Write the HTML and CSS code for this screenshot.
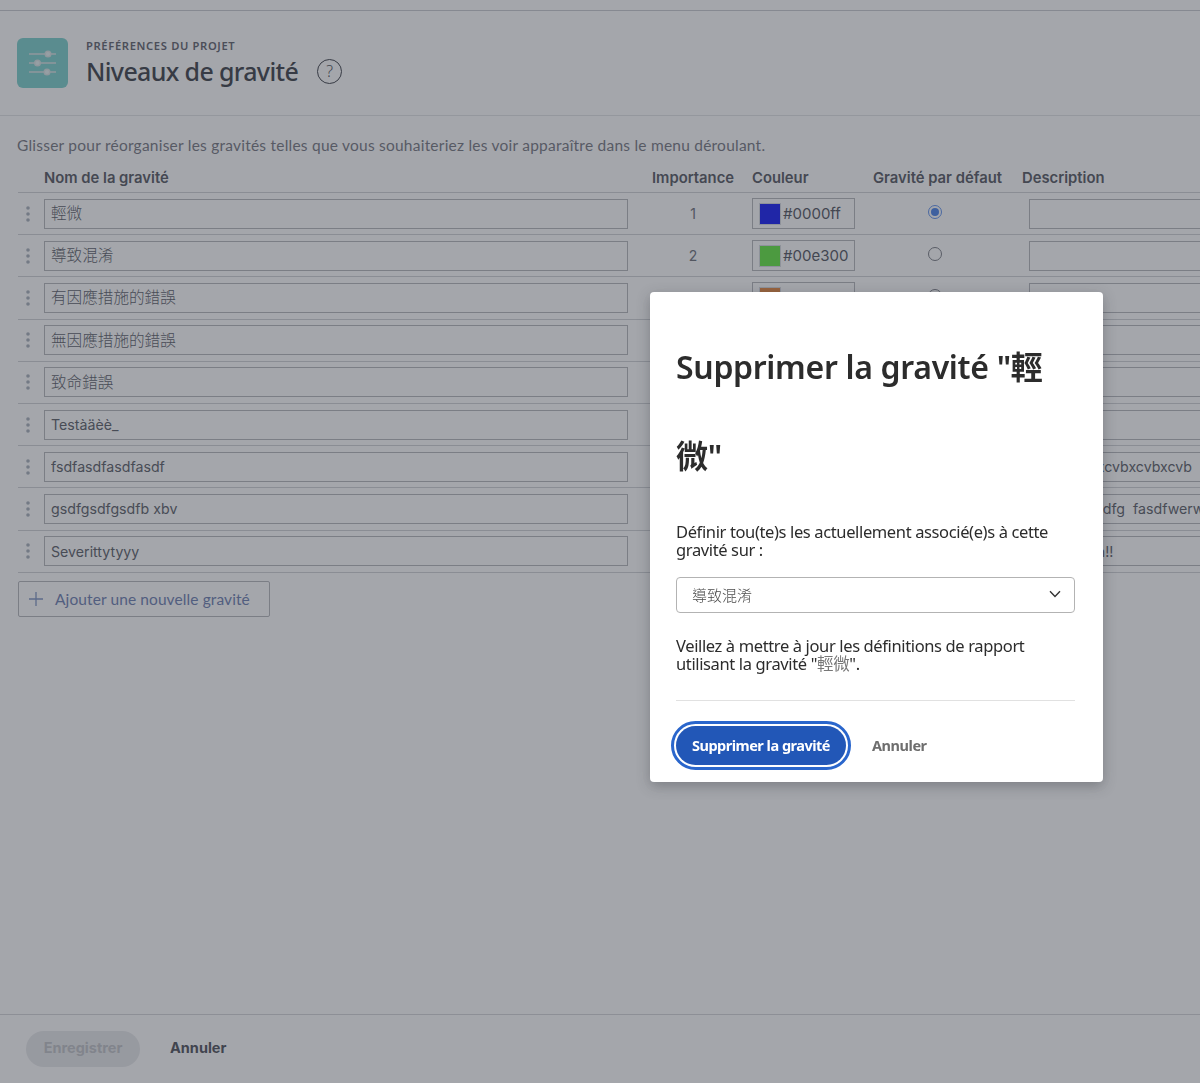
FILE: index.html
```html
<!DOCTYPE html>
<html lang="fr">
<head>
<meta charset="utf-8">
<title>Niveaux de gravité</title>
<link rel="stylesheet" href="styles.css">
</head>
<body>
<div class="app">
  <div class="topbar"></div>
  <header class="head">
    <div class="head-icon">
      <svg width="51" height="50" viewBox="0 0 51 50" fill="none" stroke="#d9e4e4" stroke-width="1.4">
        <path d="M12 16H39M12 25H39M12 34H39"/>
        <circle cx="31" cy="16" r="2.8" fill="#e6f2f2"/>
        <circle cx="20.5" cy="25" r="2.8" fill="#e6f2f2"/>
        <circle cx="30" cy="34" r="2.8" fill="#e6f2f2"/>
      </svg>
    </div>
    <div class="head-text">
      <div class="eyebrow">PRÉFÉRENCES DU PROJET</div>
      <h1 class="title">Niveaux de gravité</h1>
    </div>
    <div class="help">?</div>
  </header>
  <main class="main">
    <p class="intro">Glisser pour réorganiser les gravités telles que vous souhaiteriez les voir apparaître dans le menu déroulant.</p>
    <div class="table">
      <div class="row row-head">
        <div></div><div>Nom de la gravité</div><div>Importance</div><div>Couleur</div><div>Gravité par défaut</div><div>Description</div>
      </div>
      <div class="row">
        <svg class="grip" width="6" height="16" viewBox="0 0 6 16"><circle cx="3" cy="2" r="1.8"/><circle cx="3" cy="8" r="1.8"/><circle cx="3" cy="14" r="1.8"/></svg>
        <input class="field cjk" value="輕微"><div class="num">1</div>
        <div class="color"><span class="swatch sw-blue"></span>#0000ff</div>
        <div class="radio-cell"><span class="radio on"></span></div>
        <input class="field desc" value="">
      </div>
      <div class="row">
        <svg class="grip" width="6" height="16" viewBox="0 0 6 16"><circle cx="3" cy="2" r="1.8"/><circle cx="3" cy="8" r="1.8"/><circle cx="3" cy="14" r="1.8"/></svg>
        <input class="field cjk" value="導致混淆"><div class="num">2</div>
        <div class="color"><span class="swatch sw-green"></span>#00e300</div>
        <div class="radio-cell"><span class="radio"></span></div>
        <input class="field desc" value="">
      </div>
      <div class="row">
        <svg class="grip" width="6" height="16" viewBox="0 0 6 16"><circle cx="3" cy="2" r="1.8"/><circle cx="3" cy="8" r="1.8"/><circle cx="3" cy="14" r="1.8"/></svg>
        <input class="field cjk" value="有因應措施的錯誤"><div class="num"></div>
        <div class="color"><span class="swatch sw-orange"></span></div>
        <div class="radio-cell"><span class="radio"></span></div>
        <input class="field desc" value="">
      </div>
      <div class="row">
        <svg class="grip" width="6" height="16" viewBox="0 0 6 16"><circle cx="3" cy="2" r="1.8"/><circle cx="3" cy="8" r="1.8"/><circle cx="3" cy="14" r="1.8"/></svg>
        <input class="field cjk" value="無因應措施的錯誤"><div class="num"></div>
        <div class="color"></div>
        <div class="radio-cell"><span class="radio"></span></div>
        <input class="field desc" value="">
      </div>
      <div class="row">
        <svg class="grip" width="6" height="16" viewBox="0 0 6 16"><circle cx="3" cy="2" r="1.8"/><circle cx="3" cy="8" r="1.8"/><circle cx="3" cy="14" r="1.8"/></svg>
        <input class="field cjk" value="致命錯誤"><div class="num"></div>
        <div class="color"></div>
        <div class="radio-cell"><span class="radio"></span></div>
        <input class="field desc" value="">
      </div>
      <div class="row">
        <svg class="grip" width="6" height="16" viewBox="0 0 6 16"><circle cx="3" cy="2" r="1.8"/><circle cx="3" cy="8" r="1.8"/><circle cx="3" cy="14" r="1.8"/></svg>
        <input class="field" value="Testàäèè_"><div class="num"></div>
        <div class="color"></div>
        <div class="radio-cell"><span class="radio"></span></div>
        <input class="field desc" value="">
      </div>
      <div class="row">
        <svg class="grip" width="6" height="16" viewBox="0 0 6 16"><circle cx="3" cy="2" r="1.8"/><circle cx="3" cy="8" r="1.8"/><circle cx="3" cy="14" r="1.8"/></svg>
        <input class="field" value="fsdfasdfasdfasdf"><div class="num"></div>
        <div class="color"></div>
        <div class="radio-cell"><span class="radio"></span></div>
        <input class="field desc" value="fcvbxcvbxcvbxcvbxcvb">
      </div>
      <div class="row">
        <svg class="grip" width="6" height="16" viewBox="0 0 6 16"><circle cx="3" cy="2" r="1.8"/><circle cx="3" cy="8" r="1.8"/><circle cx="3" cy="14" r="1.8"/></svg>
        <input class="field" value="gsdfgsdfgsdfb xbv"><div class="num"></div>
        <div class="color"></div>
        <div class="radio-cell"><span class="radio"></span></div>
        <input class="field desc" value="sdfgsdfgi dfg  fasdfwerwerwer">
      </div>
      <div class="row">
        <svg class="grip" width="6" height="16" viewBox="0 0 6 16"><circle cx="3" cy="2" r="1.8"/><circle cx="3" cy="8" r="1.8"/><circle cx="3" cy="14" r="1.8"/></svg>
        <input class="field" value="Severittytyyy"><div class="num"></div>
        <div class="color"></div>
        <div class="radio-cell"><span class="radio"></span></div>
        <input class="field desc" value="Test testin!!">
      </div>
    </div>
    <button class="add">
      <svg width="16" height="16" viewBox="0 0 16 16" fill="none" stroke="#7d94c4" stroke-width="1.3"><path d="M8 1V15M1 8H15"/></svg>
      Ajouter une nouvelle gravité
    </button>
  </main>
  <footer class="foot">
    <button class="save">Enregistrer</button>
    <button class="cancel">Annuler</button>
  </footer>
</div>
<div class="overlay"></div>
<div class="modal">
  <h2 class="modal-title">Supprimer la gravité "輕微"</h2>
  <p class="modal-text set-label">Définir tou(te)s les actuellement associé(e)s à cette gravité sur :</p>
  <div class="select">
    <span>導致混淆</span>
    <svg width="12" height="8" viewBox="0 0 12 8" fill="none" stroke="#333" stroke-width="1.4"><path d="M1 1.2L6 6.4L11 1.2"/></svg>
  </div>
  <p class="modal-text note">Veillez à mettre à jour les définitions de rapport utilisant la gravité "<span class="cjk-grey">輕微</span>".</p>
  <div class="modal-actions">
    <button class="danger">Supprimer la gravité</button>
    <button class="modal-cancel">Annuler</button>
  </div>
</div>
</body>
</html>
```
FILE: styles.css
```css
* { box-sizing: border-box; }
html, body { margin: 0; height: 100%; overflow: hidden; background: #fff; }
body { font-family: "Open Sans", "Noto Sans CJK TC", sans-serif; color: #4b4e57; font-size: 14px; }
button { font-family: inherit; cursor: pointer; }

.app { height: 1083px; width: 1200px; display: flex; flex-direction: column; overflow: hidden; }
.topbar { height: 11px; border-bottom: 1px solid #c9cbd0; flex: none; }

.head { height: 105px; flex: none; display: flex; align-items: center; padding: 0 0 1px 17px; border-bottom: 1px solid #e2e3e6; }
.head-icon { width: 51px; height: 50px; background: #79cfcc; border-radius: 6px; flex: none; }
.head-icon svg { display: block; }
.head-text { margin-left: 18px; }
.eyebrow { font-family: "Noto Sans", sans-serif; font-size: 11.2px; font-weight: 600; letter-spacing: .65px; line-height: 14px; color: #5d606a; margin-top: 1px; }
.title { font-family: "Noto Sans", sans-serif; font-size: 25px; font-weight: 500; letter-spacing: -.65px; margin: 1px 0 0; line-height: 34px; color: #3a3d46; }
.help { width: 25px; height: 25px; margin: 17px 0 0 19px; border: 1px solid #3a3d46; border-radius: 50%; text-align: center; font-family: "Noto Sans", sans-serif; font-size: 16px; font-weight: 300; line-height: 23px; color: #4b4e57; }

.main { flex: 1; padding: 19px 0 0 18px; }
.intro { margin: 0 0 0 -1px; font-family: "Lato", sans-serif; font-size: 15.5px; letter-spacing: .23px; line-height: 20px; color: #74767f; white-space: nowrap; }

.table { width: 1400px; margin-top: 12px; }
.row { display: grid; grid-template-columns: 26px 608px 100px 121px 149px 400px; align-items: center; height: 42.2px; border-bottom: 1px solid #cfd1d5; }
.row-head { height: 26px; font-family: "Inter", sans-serif; font-size: 14.8px; font-weight: 600; color: #52555e; padding-bottom: 3px; margin-top: 1px; }
.grip { fill: #a7b0ba; margin-left: 7px; }
.field { display: block; width: 584px; height: 30px; border: 1px solid #b4b6bb; background: #fff; padding: 0 6px; margin: 0; font-family: "Inter", "Noto Sans CJK TC", sans-serif; font-size: 14.2px; color: #585b65; outline: 0; border-radius: 0; }
.field.cjk { font-size: 15.6px; font-weight: 300; padding-bottom: 3px; }
.desc { width: 380px; margin-left: 7px; }
.num { text-align: center; width: 82px; font-family: "Inter", sans-serif; font-size: 14px; color: #6a6d77; }
.color { width: 103px; height: 31px; border: 1px solid #b4b6bb; display: flex; align-items: center; padding-left: 6px; font-family: "Inter", sans-serif; font-size: 15px; color: #4f525c; }
.swatch { width: 22px; height: 22px; margin-right: 2px; border: 1px solid #d8dae0; flex: none; }
.sw-blue { background: #0f17f7; }
.sw-green { background: #5fe93c; }
.sw-orange { background: #e8863a; }
.radio-cell { padding-left: 55px; height: 100%; padding-top: 12px; }
.radio { display: block; width: 14px; height: 14px; border: 1px solid #777a82; border-radius: 50%; background: #fff; }
.radio.on { border-color: #5d90ee; padding: 2px; background: #4680ea content-box; }

.add { display: flex; align-items: center; gap: 11px; width: 252px; height: 36px; margin-top: 8.5px; padding: 0 0 0 9px; background: #fff; border: 1px solid #b4b6bb; border-radius: 2px; font-family: "Lato", sans-serif; font-size: 15.5px; letter-spacing: .1px; color: #6a7cb0; }

.foot { flex: none; height: 69px; border-top: 1px solid #d5d6d9; display: flex; align-items: center; padding: 0 0 0 26px; gap: 30px; }
.save { width: 114px; height: 36px; border: 0; border-radius: 18px; background: #e8e9eb; color: #c0c2c6; font-family: "Inter", sans-serif; font-size: 14.5px; font-weight: 700; padding: 0 0 3px; }
.cancel { border: 0; padding: 0 0 3px; background: none; color: #4b4e57; font-family: "Inter", sans-serif; font-size: 14.5px; font-weight: 700; }

.overlay { position: fixed; inset: 0; background: rgba(53, 58, 69, .45); }

.modal { position: fixed; left: 650px; top: 292px; width: 453px; height: 490px; padding: 30px 28px 0 26px; background: #fff; border-radius: 4px; box-shadow: 0 4px 14px rgba(30, 32, 40, .3); color: #222; }
.modal-title { margin: 0; font-family: "Noto Sans", "Noto Sans CJK TC", sans-serif; font-size: 32px; font-weight: 600; letter-spacing: -.32px; line-height: 89px; color: #2c2c2c; }
.modal-text { margin: 0; font-family: "Noto Sans", "Noto Sans CJK TC", sans-serif; font-size: 16.5px; line-height: 18px; letter-spacing: -.37px; color: #2c2c2c; }
.set-label { margin-top: 23px; }
.select { display: flex; align-items: center; justify-content: space-between; height: 36px; width: 399px; margin-top: 18px; padding: 0 13px 2px 15px; border: 1px solid #b3b3b3; border-radius: 4px; font-family: "Noto Sans CJK TC", sans-serif; font-size: 15px; font-weight: 300; color: #4b4b4b; }
.note { margin-top: 24px; width: 399px; padding-bottom: 27px; border-bottom: 1px solid #e1e1e1; }
.cjk-grey { color: #777; }
.modal-actions { display: flex; align-items: center; margin-top: 25px; gap: 26px; }
.danger { width: 170px; height: 39px; border: 0; border-radius: 20px; background: #2257b7; color: #fff; font-family: "Noto Sans", sans-serif; font-size: 14.5px; font-weight: 700; letter-spacing: -.5px; padding: 0 0 2px; outline: 3px solid #2a66cc; outline-offset: 2px; }
.modal-cancel { border: 0; padding: 0 0 2px; background: none; font-family: "Noto Sans", sans-serif; font-size: 14.5px; font-weight: 700; letter-spacing: -.45px; color: #6e6e6e; }
```
